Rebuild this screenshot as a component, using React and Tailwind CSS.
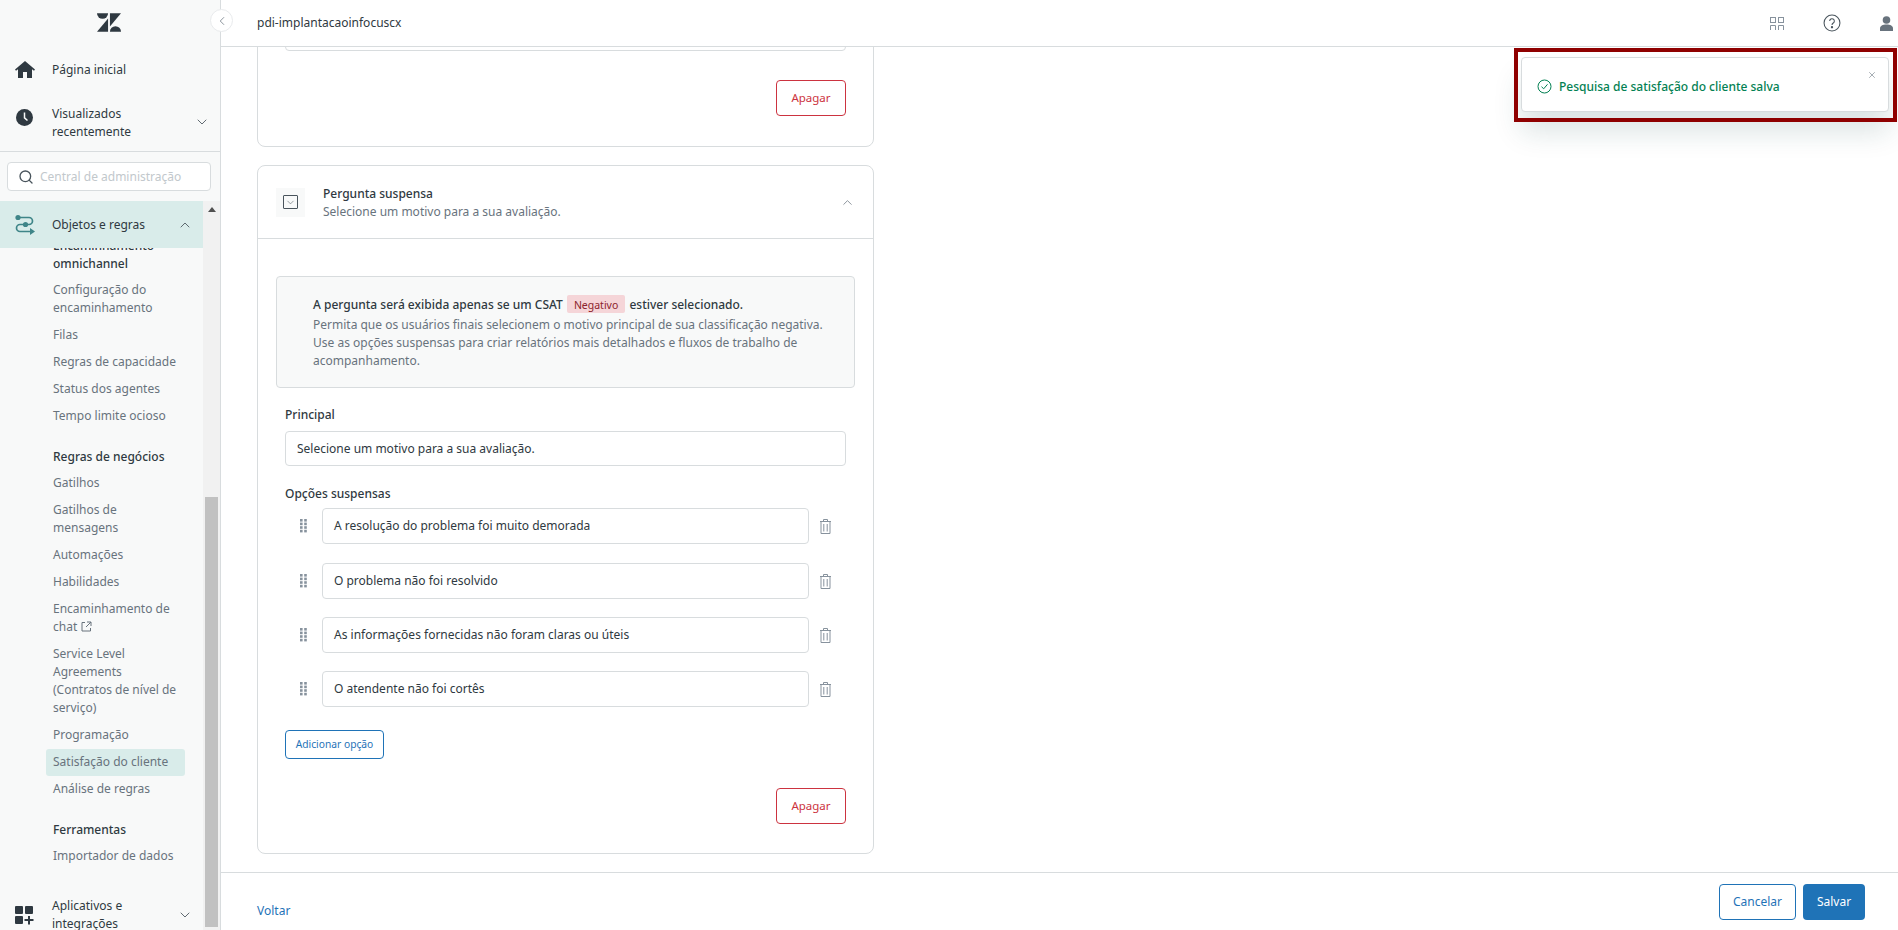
import React from 'react';
import { ChevronDown, ChevronUp, ChevronLeft, Search, X } from 'lucide-react';

const ZendeskLogo = () => (
  <svg width="24" height="19" viewBox="0 0 26 20" fill="#2f3941">
    <path d="M12 5.6V20H0L12 5.6z" />
    <path d="M12 0a6 6 0 0 1-12 0h12z" />
    <path d="M14 20a6 6 0 0 1 12 0H14z" />
    <path d="M14 14.4V0h12L14 14.4z" />
  </svg>
);

const HomeIcon = () => (
  <svg width="20" height="17" viewBox="0 0 20 17" fill="#2f3941">
    <path d="M10 0 L20 8.6 L19 9.8 L17 8.3 V17 H12 V11 H8 V17 H3 V8.3 L1 9.8 L0 8.6 Z" />
  </svg>
);

const ClockIcon = () => (
  <svg width="17" height="17" viewBox="0 0 17 17">
    <circle cx="8.5" cy="8.5" r="8.5" fill="#2f3941" />
    <path d="M8.5 3.5 V8.8 L11.5 11.5" stroke="#f8f9f9" strokeWidth="1.5" fill="none" />
  </svg>
);

const RoutesIcon = () => (
  <svg width="20" height="22" viewBox="0 0 20 22" fill="none" stroke="#3f8588" strokeWidth="1.7">
    <path d="M3 3.5 H14 a3.5 3.5 0 0 1 0 7 H5 a3.5 3.5 0 0 0 0 7 H17" />
    <circle cx="3" cy="3.5" r="2.6" fill="#3f8588" stroke="none" />
    <circle cx="10.5" cy="10.5" r="2.6" fill="#3f8588" stroke="none" />
    <path d="M15 14 L20 17.5 L15 21 Z" fill="#3f8588" stroke="none" />
  </svg>
);

const AppsIcon = () => (
  <svg width="19" height="19" viewBox="0 0 19 19" fill="#2f3941">
    <rect x="0" y="0" width="8" height="8" rx="1" />
    <rect x="10" y="0" width="8" height="8" rx="1" />
    <rect x="0" y="10" width="8" height="8" rx="1" />
    <path d="M13 10 H15 V13 H18.5 V15 H15 V18.5 H13 V15 H9.5 V13 H13 Z" />
  </svg>
);

const ExternalIcon = () => (
  <svg width="11" height="11" viewBox="0 0 11 11" fill="none" stroke="#68737d" className="inline-block ml-[4px] align-[-1px]">
    <path d="M4 1.5 H1 V10 H9.5 V7 M6 1 H10 V5 M10 1 L5 6" />
  </svg>
);

const DragIcon = () => (
  <svg width="7" height="14" viewBox="0 0 7 14" fill="#87929d">
    {[0, 3.6, 7.2, 10.8].map((y) => (
      <g key={y}>
        <rect x="0" y={y} width="2.6" height="2.6" />
        <rect x="4.2" y={y} width="2.6" height="2.6" />
      </g>
    ))}
  </svg>
);

const TrashIcon = () => (
  <svg width="11" height="15" viewBox="0 0 11 15" fill="none" stroke="#87929d">
    <path d="M0 2.5 H11 M3.5 2.5 V0.5 H7.5 V2.5 M1 2.5 V14.5 H10 V2.5 M3.8 5 V12.5 M7.2 5 V12.5" />
  </svg>
);

const navGroups = [
  {
    items: ['Configuração do encaminhamento', 'Filas', 'Regras de capacidade', 'Status dos agentes', 'Tempo limite ocioso'],
  },
  {
    title: 'Regras de negócios',
    items: ['Gatilhos', 'Gatilhos de mensagens', 'Automações', 'Habilidades', 'Encaminhamento de chat', 'Service Level Agreements (Contratos de nível de serviço)', 'Programação', 'Satisfação do cliente', 'Análise de regras'],
  },
  {
    title: 'Ferramentas',
    items: ['Importador de dados'],
  },
];

const NavItem = ({ label }) => (
  <div className={`ml-[46px] w-[139px] px-[7px] py-[4.5px] rounded-[3px] text-[12px] leading-[18px] text-[#68737d] ${label === 'Satisfação do cliente' ? 'bg-[#d9ecea] text-[#2f3941]' : ''}`}>
    {label}
    {label === 'Encaminhamento de chat' && <ExternalIcon />}
  </div>
);

const Sidebar = () => (
  <aside className="w-[221px] h-full shrink-0 flex flex-col bg-[#f8f9f9] border-r border-[#d8dcde]">
    <div className="h-[46px] flex items-center justify-center shrink-0 pr-[2px] pb-[2px]">
      <ZendeskLogo />
    </div>
    <div className="h-[46px] flex items-center shrink-0 text-[12px] text-[#2f3941]">
      <div className="w-[52px] flex justify-center pr-[3px]"><HomeIcon /></div>
      <span className="mt-[1px]">Página inicial</span>
    </div>
    <div className="h-[60px] flex items-center shrink-0 text-[12px] leading-[18px] text-[#2f3941] border-b border-[#d8dcde]">
      <div className="w-[52px] flex justify-center pr-[3px] -mt-[8px]"><ClockIcon /></div>
      <div className="flex-1 mt-[2px]">Visualizados<br />recentemente</div>
      <ChevronDown size={16} strokeWidth={1.3} className="mr-[10px] text-[#49545c]" />
    </div>
    <div className="h-[49px] shrink-0 pt-[10px] px-[7px]">
      <div className="h-[29px] w-[204px] flex items-center bg-white border border-[#d8dcde] rounded-[4px] pl-[10px] gap-[6px] text-[12px] text-[#c2c8cc]">
        <Search size={16} strokeWidth={2} className="text-[#49545c]" />
        <span className="mt-[1px]">Central de administração</span>
      </div>
    </div>
    <div className="flex-1 flex min-h-0">
      <div className="w-[203px] flex flex-col min-h-0">
        <div className="h-[47px] shrink-0 flex items-center bg-[#d9ecea] text-[12px] text-[#2f3941] relative z-10">
          <div className="w-[52px] flex justify-center pr-[3px]"><RoutesIcon /></div>
          <div className="flex-1">Objetos e regras</div>
          <ChevronUp size={16} strokeWidth={1.3} className="mr-[10px] text-[#49545c]" />
        </div>
        <div className="flex-1 overflow-hidden min-h-0">
          <div className="-mt-[11px] ml-[53px] w-[130px] text-[12px] leading-[18px] font-medium text-[#2f3941] mb-[3.5px]">
            Encaminhamento omnichannel
          </div>
          {navGroups.map((group, i) => (
            <div key={i}>
              {group.title && (
                <div className="mt-[18.5px] mb-[3.5px] ml-[53px] text-[12px] leading-[18px] font-medium text-[#2f3941]">{group.title}</div>
              )}
              {group.items.map((label) => <NavItem key={label} label={label} />)}
            </div>
          ))}
          <div className="mt-[27.5px] flex items-center text-[12px] leading-[18px] text-[#2f3941]">
            <div className="w-[52px] flex justify-center pr-[3px]"><AppsIcon /></div>
            <div className="flex-1">Aplicativos e<br />integrações</div>
            <ChevronDown size={16} strokeWidth={1.3} className="mr-[10px] text-[#49545c]" />
          </div>
        </div>
      </div>
      <div className="w-[17px] bg-[#f1f1f1] flex flex-col items-center">
        <div className="mt-[6px] w-0 h-0 border-x-[4px] border-x-transparent border-b-[5px] border-b-[#505050]" />
        <div className="mt-[285px] w-[13px] h-[430px] bg-[#c1c1c1]" />
      </div>
    </div>
  </aside>
);

const TextBox = ({ children, className = '' }) => (
  <div className={`flex items-center bg-white border border-[#d8dcde] rounded-[4px] text-[12px] text-[#2f3941] ${className}`}>
    {children}
  </div>
);

const DeleteButton = () => (
  <div className="flex justify-end mr-[27px]">
    <div className="w-[70px] h-[36px] flex items-center justify-center border border-[#cc3340] rounded-[4px] text-[11.5px] text-[#cc3340]">Apagar</div>
  </div>
);

const options = [
  'A resolução do problema foi muito demorada',
  'O problema não foi resolvido',
  'As informações fornecidas não foram claras ou úteis',
  'O atendente não foi cortês',
];

const DropdownCard = () => (
  <div className="mt-[18px] border border-[#d8dcde] rounded-[8px] pb-[29px]">
    <div className="h-[73px] flex items-center border-b border-[#d8dcde] pl-[18px] pr-[18px]">
      <div className="w-[29px] h-[29px] bg-[#f8f9f9] flex items-center justify-center">
        <div className="w-[15px] h-[14px] border border-[#49545c] rounded-[1px] flex items-center justify-center">
          <ChevronDown size={11} strokeWidth={1.2} className="text-[#49545c]" />
        </div>
      </div>
      <div className="ml-[18px] flex-1 text-[12px] leading-[18px] pt-[2px]">
        <div className="text-[#2f3941] font-medium">Pergunta suspensa</div>
        <div className="text-[#68737d]">Selecione um motivo para a sua avaliação.</div>
      </div>
      <ChevronUp size={15} strokeWidth={1.2} className="text-[#68737d]" />
    </div>
    <div className="mt-[37px] ml-[18px] mr-[18px] h-[112px] bg-[#f8f9f9] border border-[#d8dcde] rounded-[4px] pl-[36px] pr-[30px] pt-[18px] text-[12px] leading-[18px] text-[#68737d]">
      <div className="font-medium text-[#2f3941] mb-[2px]">
        A pergunta será exibida apenas se um CSAT{' '}
        <span className="inline-block h-[18px] px-[7px] mx-[1px] bg-[#f5d5d8] rounded-[2px] text-[10.5px] leading-[20px] font-normal text-[#8c232c]">Negativo</span>
        {' '}estiver selecionado.
      </div>
      Permita que os usuários finais selecionem o motivo principal de sua classificação negativa. Use as opções suspensas para criar relatórios mais detalhados e fluxos de trabalho de acompanhamento.
    </div>
    <div className="ml-[27px] mr-[27px]">
      <div className="mt-[18px] mb-[7px] text-[12px] leading-[18px] font-medium text-[#2f3941]">Principal</div>
      <TextBox className="h-[35px] pl-[11px]">Selecione um motivo para a sua avaliação.</TextBox>
      <div className="mt-[19px] mb-[5px] text-[12px] leading-[18px] font-medium text-[#2f3941]">Opções suspensas</div>
      <div className="flex flex-col gap-[18px]">
        {options.map((option, i) => (
          <div key={option} className={`flex items-center ${i === 0 ? 'mb-[1px]' : ''}`}>
            <div className="w-[37px] pl-[15px]"><DragIcon /></div>
            <TextBox className="w-[487px] h-[36px] pl-[11px]">{option}</TextBox>
            <div className="ml-[11px]"><TrashIcon /></div>
          </div>
        ))}
      </div>
      <div className="mt-[23px] w-[99px] h-[29px] flex items-center justify-center border border-[#1f73b7] rounded-[4px] text-[10.25px] text-[#1f73b7]">Adicionar opção</div>
    </div>
    <div className="mt-[29px]"><DeleteButton /></div>
  </div>
);

const Toast = () => (
  <>
    <div className="absolute left-[1521px] top-[57px] w-[368px] h-[55px] bg-white border border-[#d8dcde] rounded-[4px] shadow-[0_20px_28px_0_rgba(23,73,77,0.15)] flex items-center pl-[15px] pt-[4px] text-[12px] font-medium text-[#038153]">
      <svg width="15" height="15" viewBox="0 0 15 15" fill="none" stroke="#038153" className="mr-[7px]">
        <circle cx="7.5" cy="7.5" r="6.5" />
        <path d="M4.5 7.7 L6.7 9.8 L10.5 5.3" />
      </svg>
      Pesquisa de satisfação do cliente salva
      <X size={10} strokeWidth={1.4} className="absolute right-[11px] top-[12px] text-[#68737d]" />
    </div>
    <div className="absolute left-[1514px] top-[48px] w-[383px] h-[74px] border-[4px] border-[#8f0000] pointer-events-none" />
  </>
);

export default function App() {
  return (
    <div className="relative w-[1898px] h-[930px] overflow-hidden flex bg-white font-['Noto_Sans',sans-serif]">
      <Sidebar />
      <div className="absolute left-[210px] top-[9px] w-[23px] h-[23px] rounded-full bg-white border border-[#e9ebed] flex items-center justify-center">
        <ChevronLeft size={14} strokeWidth={1.3} className="text-[#68737d]" />
      </div>
      <main className="flex-1 h-full flex flex-col min-w-0">
        <header className="h-[47px] shrink-0 flex items-center justify-between border-b border-[#d8dcde] pl-[36px] text-[12px] text-[#2f3941]">
          pdi-implantacaoinfocuscx
          <div className="flex items-center">
            <svg width="14" height="13" viewBox="0 0 14 13" fill="none" stroke="#87929d" className="mr-[39px]">
              <rect x="0.5" y="0.5" width="5" height="5" />
              <rect x="8.5" y="0.5" width="5" height="5" />
              <path d="M0.5 13 V8.5 H5.5 V13 M8.5 13 V8.5 H13.5 V13" />
            </svg>
            <svg width="18" height="18" viewBox="0 0 17 17" fill="none" stroke="#49545c" className="mr-[39px]">
              <circle cx="8.5" cy="8.5" r="7.5" />
              <path d="M6.3 6.6 a2.2 2.2 0 1 1 3.4 1.9 c-.8.5-1.2.9-1.2 1.9" />
              <circle cx="8.5" cy="12.5" r=".6" fill="#49545c" />
            </svg>
            <svg width="13" height="15" viewBox="0 0 13 15" fill="#68737d" className="mr-[5px]">
              <circle cx="6.5" cy="4" r="3.8" />
              <path d="M0 15 v-2.5 c0-2.5 2.5-4 6.5-4 s6.5 1.5 6.5 4 V15 z" />
            </svg>
          </div>
        </header>
        <div className="flex-1 min-h-0 overflow-hidden pl-[36px]">
          <div className="w-[617px]">
            <div className="-mt-[40px] h-[140px] border border-[#d8dcde] rounded-[8px] pt-[8px]">
              <TextBox className="mx-[27px] h-[35px]" />
              <div className="mt-[29px]"><DeleteButton /></div>
            </div>
            <DropdownCard />
          </div>
        </div>
        <footer className="h-[58px] shrink-0 border-t border-[#d8dcde] flex items-center justify-between pl-[36px] pr-[33px] text-[12px]">
          <span className="text-[#1f73b7] mt-[18px]">Voltar</span>
          <div className="flex gap-[7px]">
            <div className="w-[77px] h-[36px] flex items-center justify-center border border-[#1f73b7] rounded-[4px] text-[#1f73b7]">Cancelar</div>
            <div className="w-[62px] h-[36px] flex items-center justify-center bg-[#1f73b7] rounded-[4px] text-white">Salvar</div>
          </div>
        </footer>
      </main>
      <Toast />
    </div>
  );
}
